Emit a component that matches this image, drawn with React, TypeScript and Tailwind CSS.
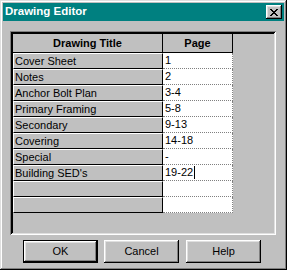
const rows: [string, string][] = [
  ['Cover Sheet', '1'],
  ['Notes', '2'],
  ['Anchor Bolt Plan', '3-4'],
  ['Primary Framing', '5-8'],
  ['Secondary', '9-13'],
  ['Covering', '14-18'],
  ['Special', '-'],
  ["Building SED's", '19-22'],
  ['', ''],
  ['', ''],
];

const raised =
  'shadow-[inset_-1px_-1px_#000,inset_1px_1px_#fff,inset_-2px_-2px_#808080,inset_2px_2px_#dfdfdf]';

const CloseGlyph = () => {
  const px = [
    [0, 0], [1, 0], [6, 0], [7, 0],
    [1, 1], [2, 1], [5, 1], [6, 1],
    [2, 2], [3, 2], [4, 2], [5, 2],
    [3, 3], [4, 3],
    [2, 4], [3, 4], [4, 4], [5, 4],
    [1, 5], [2, 5], [5, 5], [6, 5],
    [0, 6], [1, 6], [6, 6], [7, 6],
  ];
  return (
    <svg width="8" height="7" viewBox="0 0 8 7" shapeRendering="crispEdges">
      {px.map(([x, y], i) => (
        <rect key={i} x={x} y={y} width="1" height="1" fill="#000" />
      ))}
    </svg>
  );
};

const Button = ({ label, isDefault }: { label: string; isDefault?: boolean }) => (
  <div className={`h-[23px] w-[75px] ${isDefault ? 'border border-black' : ''}`}>
    <button className={`flex h-full w-full items-center justify-center bg-[#c0c0c0] text-[11px] text-black ${raised}`}>
      {label}
    </button>
  </div>
);

export default function App() {
  return (
    <div
      className="flex h-[270px] w-[287px] flex-col bg-[#c0c0c0] p-[3px] shadow-[inset_-1px_-1px_#000,inset_1px_1px_#dfdfdf,inset_-2px_-2px_#808080,inset_2px_2px_#fff]"
      style={{ fontFamily: '"Liberation Sans", Arial, sans-serif' }}
    >
      {/* Title bar */}
      <div className="flex h-[18px] items-center justify-between bg-[#008080] pl-[2px] pr-[2px]">
        <span className="text-[11.5px] font-bold text-white">Drawing Editor</span>
        <div className={`flex h-[14px] w-[16px] items-center justify-center bg-[#c0c0c0] ${raised}`}>
          <CloseGlyph />
        </div>
      </div>

      {/* Grid frame */}
      <div className="ml-[7px] mt-[10px] h-[204px] w-[266px] p-[2px] shadow-[inset_1px_1px_#808080,inset_-1px_-1px_#fff,inset_2px_2px_#000,inset_-2px_-2px_#dfdfdf]">
        <div className="h-full w-full border-l border-t border-black bg-[#c0c0c0] text-[11px] text-black">
          {/* Header */}
          <div className="flex h-[19px]">
            <div className="flex w-[150px] items-center justify-center border-b border-r border-black font-bold">
              Drawing Title
            </div>
            <div className="flex w-[70px] items-center justify-center border-b border-r border-black font-bold">
              Page
            </div>
          </div>

          {rows.map(([title, page], i) => (
            <div key={i} className="flex h-[16px]">
              <div className="flex w-[150px] items-center border-b border-l border-r border-t border-b-black border-l-white border-r-black border-t-white pl-[1px] leading-none">
                {title}
              </div>
              <div className="flex w-[70px] items-center border-b border-r border-dotted border-[#808080] bg-white pl-[2px] leading-none">
                {page}
                {page === '19-22' && <span className="ml-[1px] inline-block h-[13px] w-px bg-black" />}
              </div>
            </div>
          ))}
        </div>
      </div>

      {/* Buttons */}
      <div className="mt-[5px] flex pl-[20px]">
        <Button label="OK" isDefault />
        <div className="ml-[6px]">
          <Button label="Cancel" />
        </div>
        <div className="ml-[7px]">
          <Button label="Help" />
        </div>
      </div>
    </div>
  );
}
